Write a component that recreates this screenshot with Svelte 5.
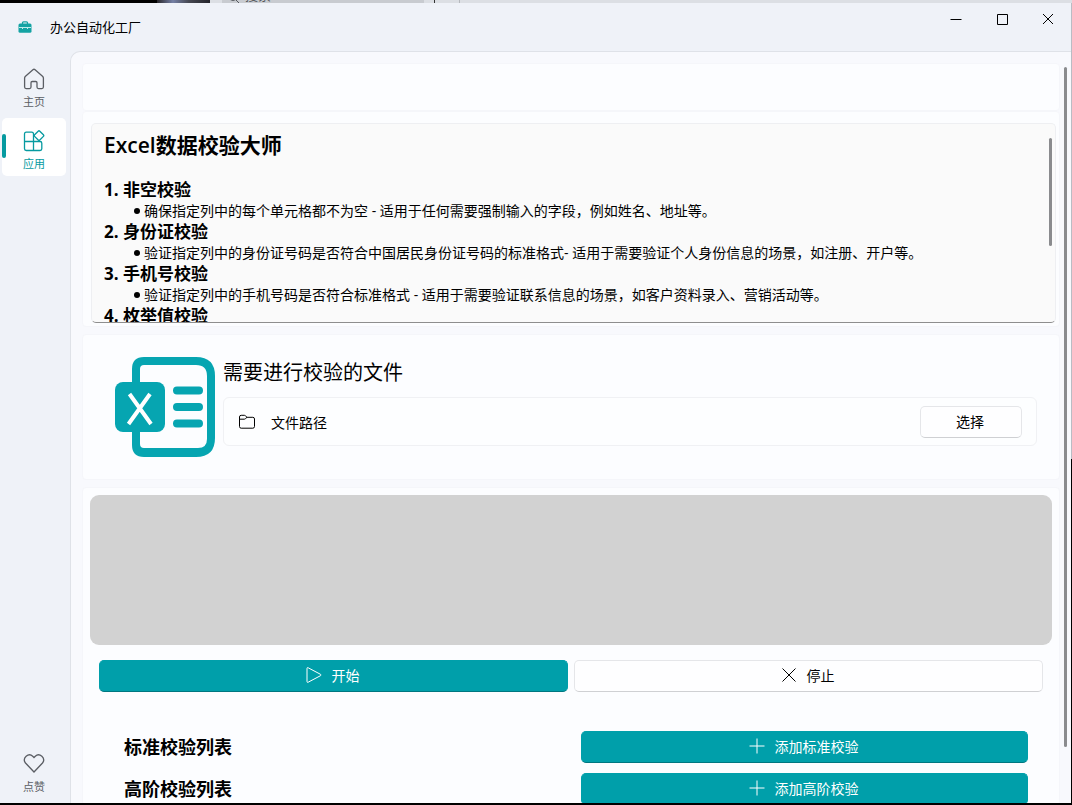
<script lang="ts">
  interface Rule {
    title: string;
    text: string;
  }

  const rules: Rule[] = [
    { title: '非空校验', text: '确保指定列中的每个单元格都不为空 - 适用于任何需要强制输入的字段，例如姓名、地址等。' },
    { title: '身份证校验', text: '验证指定列中的身份证号码是否符合中国居民身份证号码的标准格式- 适用于需要验证个人身份信息的场景，如注册、开户等。' },
    { title: '手机号校验', text: '验证指定列中的手机号码是否符合标准格式 - 适用于需要验证联系信息的场景，如客户资料录入、营销活动等。' },
    { title: '枚举值校验', text: '' },
  ];

  const lists = [
    { title: '标准校验列表', action: '添加标准校验' },
    { title: '高阶校验列表', action: '添加高阶校验' },
  ];

  let page = $state('apps');
</script>

<div class="screen">
  <div class="backdrop">
    <span class="black"></span>
    <span class="photo"></span>
    <span class="search">
      <svg width="10" height="10" viewBox="0 0 10 10"><circle cx="4" cy="4" r="3.500" /><path d="M6.500 6.500L10 10" /></svg>
      搜索
    </span>
    <span class="rest"></span>
    <span class="edge"></span>
  </div>

  <div class="window">
    <header>
      <svg class="logo" width="14" height="12" viewBox="0 0 14 12">
        <path d="M4.500 3V1.800q0-1 1-1h3q1 0 1 1V3" fill="none" stroke="#14a3a3" stroke-width="1.300" />
        <rect x=".5" y="2.500" width="13" height="9.300" rx="1.500" fill="#14a3a3" />
        <path d="M1 6.500h12M4.500 6v2M9.500 6v2" fill="none" stroke="#c2ecea" />
      </svg>
      <h1>办公自动化工厂</h1>
      <div class="controls">
        <button aria-label="最小化">
          <svg width="12" height="12" viewBox="0 0 12 12"><path d="M.5 6.500h11" /></svg>
        </button>
        <button aria-label="最大化">
          <svg width="12" height="12" viewBox="0 0 12 12"><path d="M1.500 1.500h10v10h-10z" /></svg>
        </button>
        <button aria-label="关闭">
          <svg width="12" height="12" viewBox="0 0 12 12"><path d="M1 1l10 10M11 1L1 11" /></svg>
        </button>
      </div>
    </header>

    <div class="main">
      <nav>
        <button class="nav-item" class:active={page === 'home'} onclick={() => (page = 'home')}>
          <svg width="22" height="22" viewBox="0 0 22 22">
            <path d="M9.900 1.700L2.500 8.200q-.9.800-.9 1.900v9q0 1.500 1.500 1.500h3.400q1.500 0 1.500-1.500v-4.400q0-1.200 1.200-1.200h3.600q1.200 0 1.200 1.200v4.400q0 1.500 1.500 1.500h3.400q1.500 0 1.500-1.500v-9q0-1.100-.9-1.900l-7.400-6.500q-1.100-.9-2.200 0z" />
          </svg>
          <span>主页</span>
        </button>
        <button class="nav-item" class:active={page === 'apps'} onclick={() => (page = 'apps')}>
          <svg width="22" height="22" viewBox="0 0 22 22">
            <path d="M10.500 11.500V4q0-1.800-1.800-1.800H3.300Q1.500 2.200 1.500 4v14.700q0 1.800 1.800 1.800H17q1.800 0 1.800-1.800v-5.400q0-1.800-1.800-1.800zM1.500 11.500h9v9" />
            <path d="M15.200 1.200l-3.600 3.600q-.8.800 0 1.600l3.600 3.600q.8.800 1.600 0l3.600-3.600q.8-.8 0-1.600l-3.600-3.600q-.8-.8-1.600 0z" />
          </svg>
          <span>应用</span>
        </button>
        <button class="nav-item last">
          <svg width="22" height="22" viewBox="0 0 22 22">
            <path d="M11 4.500L9.700 3.200C5.500-.8-1.200 5.300 2.500 10L11 19l8.500-9C23.200 5.300 16.500-.8 12.300 3.200z" />
          </svg>
          <span>点赞</span>
        </button>
      </nav>

      <div class="content">
        <div class="card blank"></div>

        <div class="card intro">
          <div class="textbox">
            <h2>Excel数据校验大师</h2>
            {#each rules as rule, i}
              <h3>{i + 1}. {rule.title}</h3>
              {#if rule.text}
                <p><i></i>{rule.text}</p>
              {/if}
            {/each}
            <div class="bar inner-bar"></div>
          </div>
        </div>

        <div class="card file">
          <svg class="excel" width="100" height="100" viewBox="0 0 100 100">
            <path d="M29 0h52q19 0 19 19v62q0 19-19 19H29q-12 0-12-12V12Q17 0 29 0zm0 8q-4 0-4 4v75q0 4 4 4h54q9 0 9-9V19Q92 8 81 8z" fill="#06a5b1" fill-rule="evenodd" />
            <rect x="0" y="25" width="50" height="50" rx="8" fill="#06a5b1" />
            <path d="M14.500 37l21.500 30M35 37L13.500 67" fill="none" stroke="#fff" stroke-width="4" />
            <path d="M62 33.500h22M62 50h22M62 66.500h22" fill="none" stroke="#06a5b1" stroke-width="8" stroke-linecap="round" />
          </svg>
          <div class="file-body">
            <h4>需要进行校验的文件</h4>
            <div class="path-row">
              <svg width="18" height="16" viewBox="0 0 18 16">
                <path d="M1.500 12.500V3q0-1.700 1.700-1.700h3q.7 0 1.200.5L9 3.300h5.800q1.700 0 1.700 1.700v7.500q0 1.700-1.700 1.700H3.200q-1.700 0-1.700-1.700zM1.500 5.200h4.700q.7 0 1.200-.5L9 3.300" />
              </svg>
              <span>文件路径</span>
              <button class="btn choose">选择</button>
            </div>
          </div>
        </div>

        <div class="card work">
          <div class="log"></div>
          <div class="actions">
            <button class="btn primary">
              <svg width="16" height="16" viewBox="0 0 16 16">
                <path d="M1 1.500v13q0 1.300 1.200.7l12.300-6.500q1.300-.7 0-1.400L2.200.8Q1 .2 1 1.500z" />
              </svg>
              开始
            </button>
            <button class="btn">
              <svg width="16" height="16" viewBox="0 0 16 16"><path d="M1.500 1.500l13 13M14.500 1.500l-13 13" /></svg>
              停止
            </button>
          </div>
          <div class="lists">
            {#each lists as list}
              <div class="list-row">
                <h4>{list.title}</h4>
                <button class="btn primary">
                  <svg width="16" height="16" viewBox="0 0 16 16"><path d="M8 .5v15M.5 8h15" /></svg>
                  {list.action}
                </button>
              </div>
            {/each}
          </div>
        </div>

        <div class="bar page-bar"></div>
      </div>
    </div>
  </div>
</div>

<style>
  :global(body) {
    margin: 0;
    overflow: hidden;
  }

  .screen {
    display: flex;
    flex-direction: column;
    height: 100vh;
    font-family: 'Open Sans', 'Noto Sans CJK SC', sans-serif;
    font-size: 14px;
    color: #000;
    background: linear-gradient(#b9bcc4 57%, #000 57%);
  }

  .backdrop {
    display: flex;
    height: 3px;
    flex: none;
    overflow: hidden;
    background: #dcdfe4;
  }

  .black {
    width: 157px;
    background: #000;
  }

  .photo {
    width: 53px;
    background: linear-gradient(90deg, #29272b, #7580a5 30%, #464852 60%, #24252b);
  }

  .search {
    display: flex;
    align-items: flex-end;
    gap: 6px;
    width: 202px;
    margin-left: 12px;
    padding-left: 7px;
    box-sizing: border-box;
    background: #c8cbd0;
    color: #55585e;
    font-size: 13px;
    line-height: 16px;
  }

  .rest {
    width: 10px;
    border-right: 1px solid #333;
  }

  .edge {
    width: 24px;
    border-right: 1px solid #b5b8bd;
  }

  .window {
    flex: 1;
    min-height: 0;
    display: flex;
    flex-direction: column;
    margin-right: 1px;
    background: #eff2f8;
    border-bottom: 2px solid #000;
  }

  h1,
  h2,
  h3,
  h4,
  p {
    margin: 0;
  }

  button {
    font: inherit;
    color: inherit;
    padding: 0;
    border: none;
    background: none;
  }

  svg {
    flex: none;
    fill: none;
    stroke: currentColor;
  }

  header {
    display: flex;
    align-items: center;
    height: 48px;
    flex: none;
  }

  .logo {
    margin-left: 18px;
    stroke: none;
  }

  h1 {
    margin-left: 18px;
    padding-bottom: 2px;
    font-size: 13px;
    font-weight: 400;
  }

  .controls {
    display: flex;
    align-self: flex-start;
    margin-left: auto;
  }

  .controls button {
    display: flex;
    align-items: center;
    justify-content: center;
    width: 46px;
    height: 32px;
  }

  .main {
    flex: 1;
    min-height: 0;
    display: flex;
  }

  nav {
    width: 70px;
    flex: none;
    display: flex;
    flex-direction: column;
    gap: 4px;
    padding: 5px 4px 4px 2px;
    box-sizing: border-box;
  }

  .nav-item {
    position: relative;
    display: flex;
    flex-direction: column;
    align-items: center;
    gap: 4px;
    height: 58px;
    padding-top: 12px;
    box-sizing: border-box;
    border-radius: 5px;
    color: #5b5e64;
    font-size: 11px;
    line-height: 16px;
  }

  .nav-item svg {
    stroke-width: 1.3;
  }

  .nav-item.active {
    background: #fff;
    color: #069aa0;
  }

  .nav-item.active::before {
    content: '';
    position: absolute;
    left: 0;
    top: 16px;
    width: 4px;
    height: 24px;
    border-radius: 2px;
    background: #069aa0;
  }

  .nav-item.last {
    margin-top: auto;
  }

  .content {
    position: relative;
    flex: 1;
    min-width: 0;
    overflow: hidden;
    display: flex;
    flex-direction: column;
    padding: 11px 11px 0 11px;
    background: #f8f9fd;
    border: 1px solid #dfe2e8;
    border-width: 1px 0 0 1px;
    border-top-left-radius: 10px;
  }

  .card {
    flex: none;
    box-sizing: border-box;
    border-radius: 4px;
    background: #fcfdff;
    border: 1px solid #f5f6fa;
  }

  .blank {
    height: 48px;
  }

  .intro {
    padding: 11px 3px 3px 8px;
  }

  .textbox {
    position: relative;
    height: 200px;
    overflow: hidden;
    box-sizing: border-box;
    padding: 0 12px;
    border: 1px solid #eeeff2;
    border-bottom: 1px solid #8e8e8e;
    border-radius: 5px;
    background: #fafafa;
  }

  h2 {
    margin: 7px 0 20px;
    font-size: 21px;
    font-weight: 600;
    line-height: 28px;
  }

  h3 {
    font-size: 17px;
    line-height: 21px;
  }

  p {
    display: flex;
    align-items: center;
    padding-left: 30px;
    line-height: 21px;
    white-space: nowrap;
  }

  p i {
    width: 6px;
    height: 6px;
    margin-right: 4px;
    border-radius: 50%;
    background: #000;
  }

  .bar {
    position: absolute;
    width: 3px;
    border-radius: 2px;
    background: #8a8b8e;
  }

  .inner-bar {
    top: 14px;
    right: 3px;
    height: 108px;
  }

  .page-bar {
    top: 15px;
    right: 4px;
    height: 680px;
  }

  .file {
    display: flex;
    gap: 8px;
    height: 146px;
    margin-top: 7px;
    padding: 22px 22px 0 32px;
  }

  .excel {
    stroke: none;
  }

  .file-body {
    flex: 1;
  }

  .file-body h4 {
    font-size: 20px;
    font-weight: 400;
    line-height: 32px;
  }

  .path-row {
    display: flex;
    align-items: center;
    height: 49px;
    margin-top: 8px;
    padding: 0 14px;
    box-sizing: border-box;
    border: 1px solid #f0f1f4;
    border-radius: 6px;
    background: #fdfeff;
  }

  .path-row span {
    margin-left: 15px;
  }

  .btn {
    display: flex;
    align-items: center;
    justify-content: center;
    gap: 10px;
    height: 32px;
    padding: 0 2px 2px 0;
    box-sizing: border-box;
    border: 1px solid #e5e6e9;
    border-bottom-color: #cfd0d3;
    border-radius: 5px;
    background: #fefeff;
  }

  .btn.primary {
    color: #fff;
    background: #009faa;
    border-color: #009faa;
    border-bottom-color: #007780;
  }

  .choose {
    width: 102px;
    margin-left: auto;
  }

  .work {
    flex: 1;
    margin-top: 7px;
    padding: 7px 7px 0;
  }

  .log {
    height: 150px;
    border-radius: 9px;
    background: #d2d2d2;
  }

  .actions {
    display: flex;
    gap: 6px;
    margin: 15px 9px 0;
  }

  .actions .btn {
    flex: 1;
  }

  .lists {
    display: flex;
    flex-direction: column;
    gap: 10px;
    margin: 39px 24px 0 34px;
  }

  .list-row {
    display: grid;
    grid-template-columns: 457fr 447fr;
    align-items: center;
  }

  .list-row h4 {
    font-size: 18px;
    line-height: 24px;
  }
</style>
